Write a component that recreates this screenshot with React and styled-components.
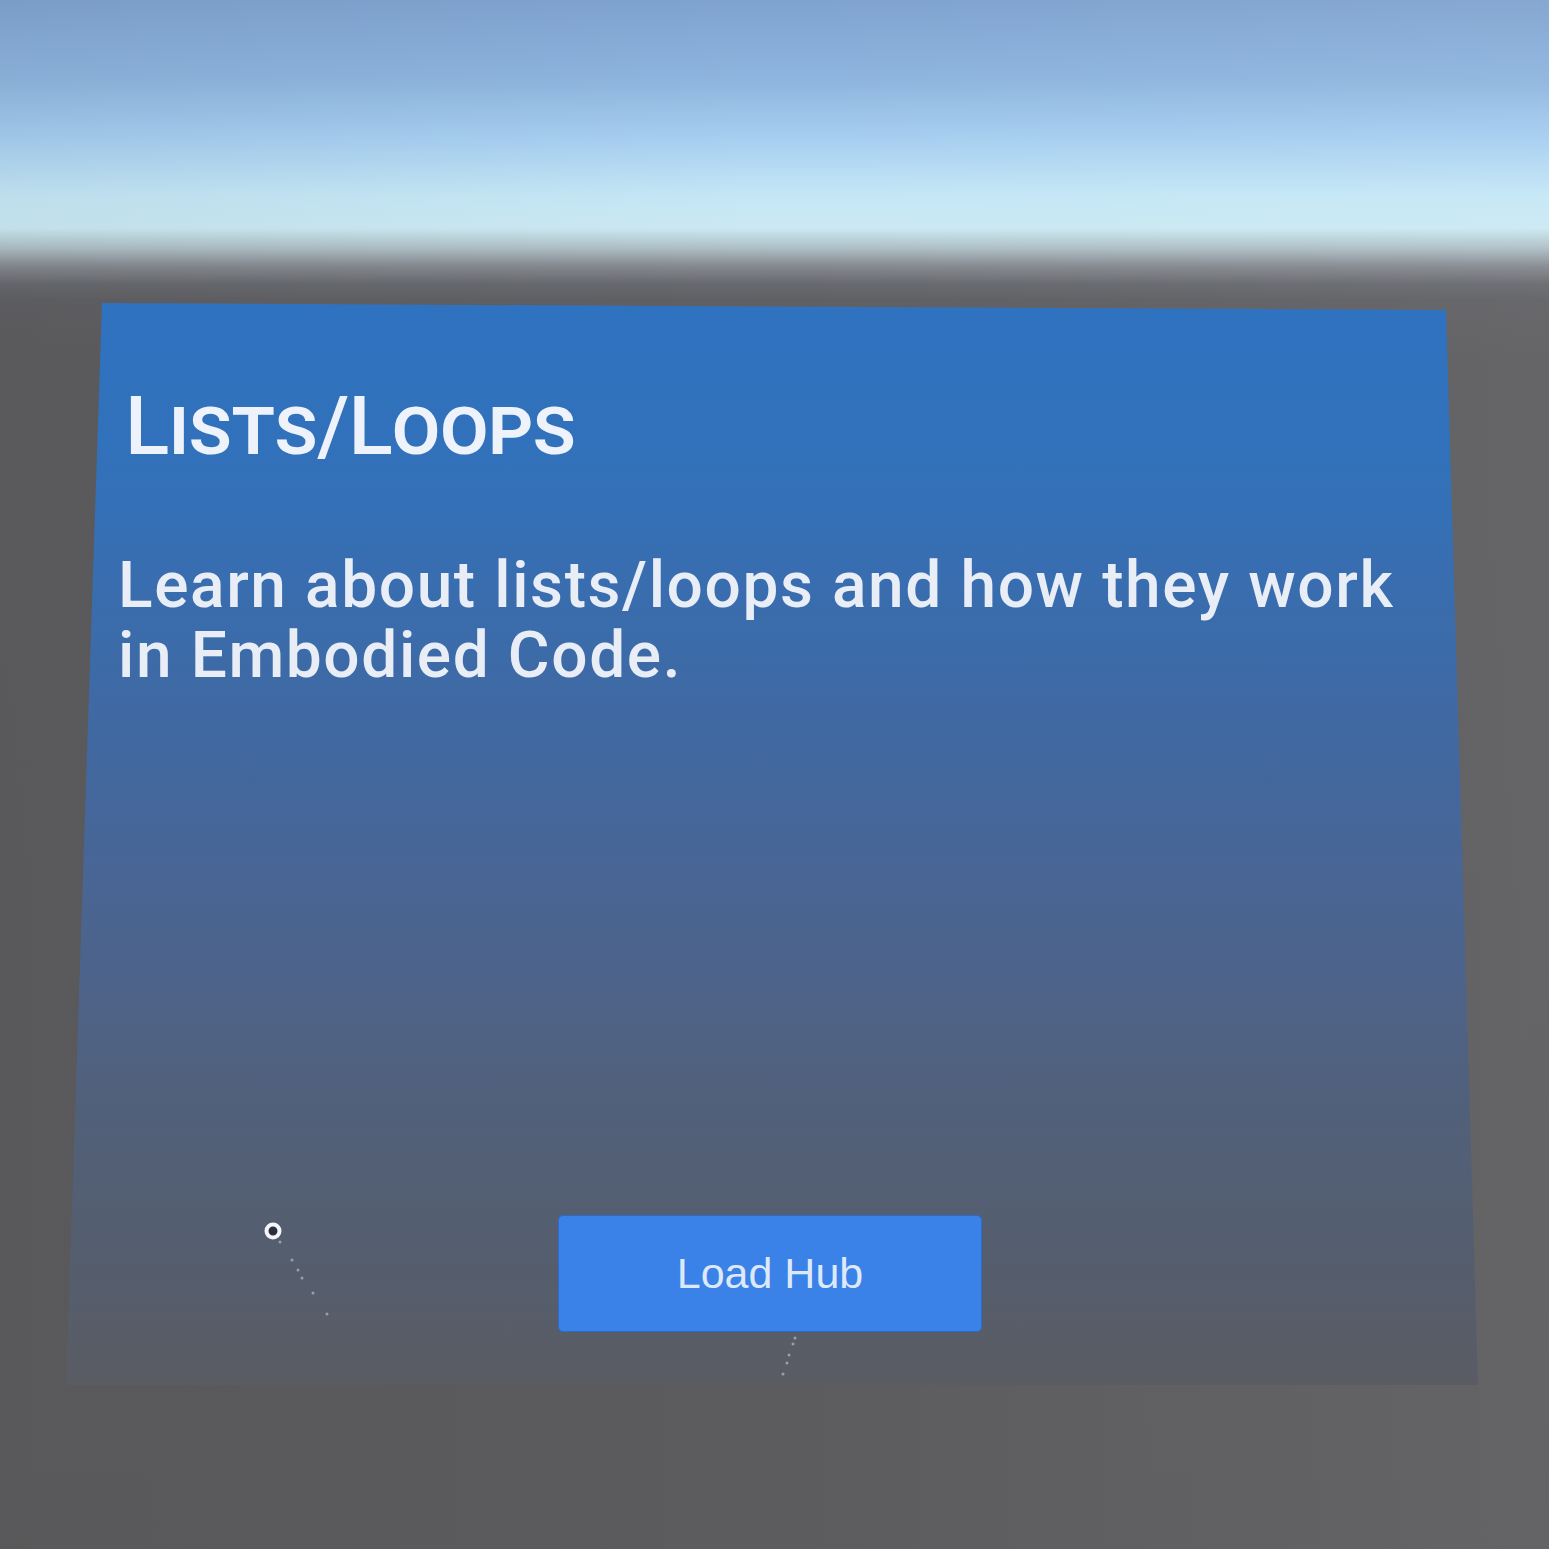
import React from 'react';
import styled, { createGlobalStyle } from 'styled-components';

const GlobalStyle = createGlobalStyle`
    html, body {
        margin: 0;
        padding: 0;
        background: #5c5b5d;
    }
`;

const Scene = styled.div`
    position: relative;
    width: 1549px;
    height: 1549px;
    box-sizing: border-box;
    padding: 303px 71px 0 66px;
    overflow: hidden;
    background:
        linear-gradient(90deg, rgba(0, 0, 0, 0.04) 0%, rgba(255, 255, 255, 0) 50%, rgba(255, 255, 255, 0.05) 100%),
        linear-gradient(
            180deg,
            #7fa3cf 0px,
            #8eb5df 80px,
            #a7cff0 140px,
            #c4e7f6 195px,
            #cbe9f3 228px,
            #aebfc6 248px,
            #858a90 266px,
            #68696e 284px,
            #606064 300px,
            #5d5c5e 360px,
            #5c5b5d 1549px
        );
`;

const Panel = styled.div`
    display: flex;
    flex-direction: column;
    box-sizing: border-box;
    width: 1412px;
    height: 1082px;
    padding: 82px 60px 53px 59px;
    clip-path: polygon(36px 0, 1380px 7px, 100% 100%, 0 100%);
    background: linear-gradient(
        180deg,
        #2f72c0 0%,
        #3271ba 15%,
        #3e6aa6 35%,
        #4a6593 55%,
        #516079 75%,
        #565d6b 92%,
        #5a5c63 100%
    );
`;

const Title = styled.h1`
    margin: 0;
    font-family: Roboto, "Liberation Sans", sans-serif;
    font-weight: 500;
    font-size: 82px;
    line-height: 1;
    font-variant: small-caps;
    letter-spacing: -0.5px;
    color: #eef3fb;
`;

const Body = styled.p`
    margin: 84px 0 0 -7px;
    font-family: Roboto, "Liberation Sans", sans-serif;
    font-weight: 500;
    font-size: 64px;
    line-height: 70px;
    letter-spacing: 1.6px;
    color: #e8edf6;
`;

const LoadButton = styled.button`
    align-self: center;
    margin-top: auto;
    width: 424px;
    height: 117px;
    margin-right: 3px;
    border: 1px solid #2c6cc8;
    border-radius: 5px;
    background: #3a82e8;
    color: #dde9f8;
    font-family: "Liberation Sans", Arial, sans-serif;
    font-size: 43px;
    cursor: pointer;
`;

const Pointer = styled.svg`
    position: absolute;
    left: 0;
    top: 0;
    pointer-events: none;
`;

export default function App() {
    return (
        <>
            <GlobalStyle />
            <Scene>
                <Panel>
                    <Title>Lists/Loops</Title>
                    <Body>Learn about lists/loops and how they work in Embodied Code.</Body>
                    <LoadButton>Load Hub</LoadButton>
                </Panel>
                <Pointer width="1549" height="1549" viewBox="0 0 1549 1549">
                    <g fill="#c9ccd4" opacity="0.6">
                        <circle cx="280" cy="1242" r="1.5" />
                        <circle cx="292" cy="1260" r="1.5" />
                        <circle cx="298" cy="1270" r="1.5" />
                        <circle cx="302" cy="1278" r="1.5" />
                        <circle cx="313" cy="1293" r="1.5" />
                        <circle cx="327" cy="1314" r="1.5" />
                        <circle cx="795" cy="1338" r="1.5" />
                        <circle cx="793" cy="1344" r="1.5" />
                        <circle cx="789" cy="1355" r="1.5" />
                        <circle cx="787" cy="1363" r="1.5" />
                        <circle cx="783" cy="1374" r="1.5" />
                    </g>
                    <circle cx="273" cy="1231" r="8" fill="#2b3040" />
                    <circle cx="273" cy="1231" r="6.5" fill="none" stroke="#f4f6fa" strokeWidth="4" />
                    <circle cx="273" cy="1231" r="2.5" fill="#2b3040" />
                </Pointer>
            </Scene>
        </>
    );
}
